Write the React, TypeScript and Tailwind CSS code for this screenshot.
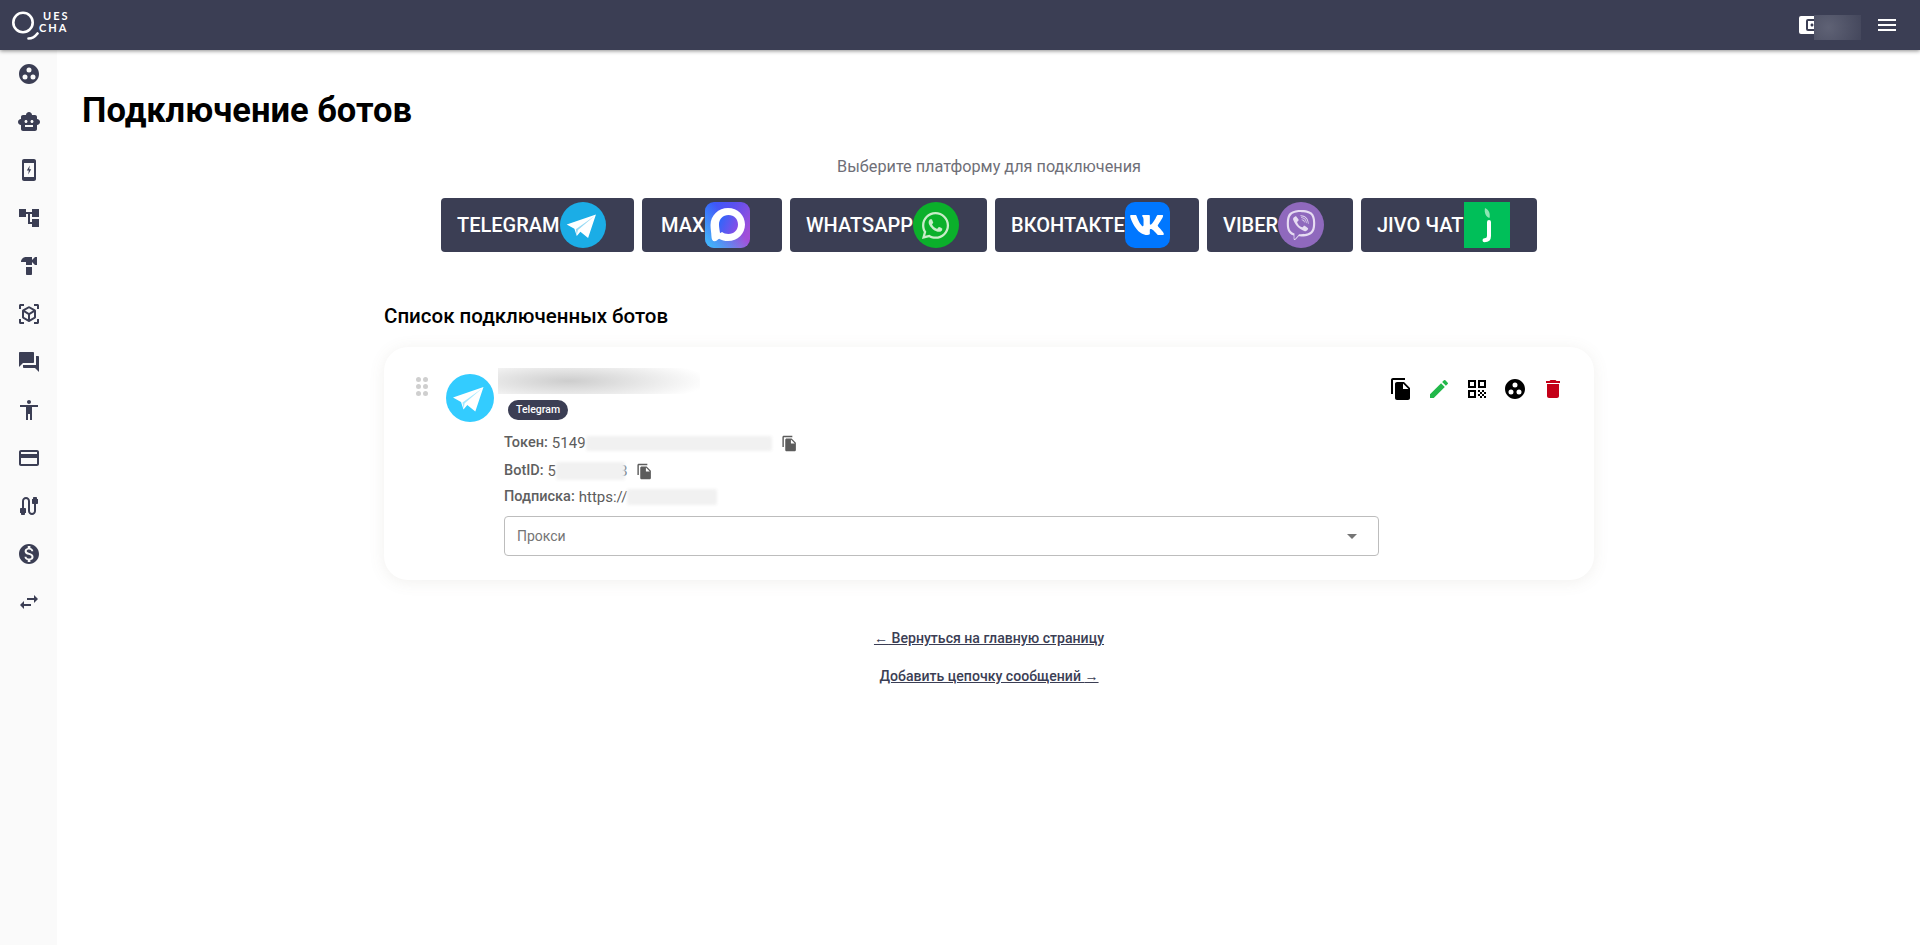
import React from "react";
import {
  MdGroupWork, MdSmartToy, MdAccountTree, MdHardware, MdViewInAr, MdForum, MdAccessibility,
  MdCreditCard, MdCable, MdMonetizationOn, MdSwapHoriz, MdFileCopy, MdEdit, MdQrCode, MdDelete,
  MdAccountBalanceWallet, MdMenu,
} from "react-icons/md";
import { FaWhatsapp, FaViber, FaVk } from "react-icons/fa";

const PhoneBolt = ({ className = "" }: { className?: string }) => (
  <svg viewBox="0 0 24 24" className={className} fill="currentColor">
    <path fillRule="evenodd" d="M7 1h10c1.100 0 2 .9 2 2v18c0 1.100-.9 2-2 2H7c-1.100 0-2-.9-2-2V3c0-1.100.9-2 2-2zm0 4v14h10V5H7z" />
    <path d="M12.800 7.500 9.800 12.600h2l-.6 3.900 3-5.200h-2z" />
  </svg>
);

const Plane = ({ bg, s }: { bg: string; s: number }) => (
  <svg viewBox="0 0 48 48" width={s} height={s} className="shrink-0">
    <circle cx="24" cy="24" r="24" fill={bg} />
    <path d="M37.500 13 7 23.500l8 4.500 2.500 7.500 3.800-4.400 8 6.400z" fill="#fff" />
    <path d="M36 14.500 16.500 28.500l1 6 1.200-5.200z" fill={bg} opacity=".45" />
  </svg>
);

const MaxIcon = () => (
  <svg viewBox="0 0 45 46" width="45" height="46" className="shrink-0">
    <defs>
      <linearGradient id="mx" x1="0" y1="0" x2="1" y2="0.6">
        <stop offset="0" stopColor="#2f5cff" />
        <stop offset=".5" stopColor="#5a50f0" />
        <stop offset="1" stopColor="#a24fd8" />
      </linearGradient>
      <linearGradient id="mb" x1="0" y1="1" x2="0.6" y2="0.45">
        <stop offset="0" stopColor="#3fc4fb" />
        <stop offset="1" stopColor="#3fc4fb" stopOpacity="0" />
      </linearGradient>
      <linearGradient id="mi" x1="0" y1="0.3" x2="1" y2="0.7">
        <stop offset="0" stopColor="#2f66fa" />
        <stop offset="1" stopColor="#8a4ce6" />
      </linearGradient>
    </defs>
    <rect width="45" height="46" rx="9" fill="url(#mx)" />
    <rect width="45" height="46" rx="9" fill="url(#mb)" />
    <path d="M23 6C13.500 6 5.500 13.500 5.500 23c0 4 .8 7.500.9 11 .1 3.500 1.300 5.200 3.100 5.200 1.700 0 3-1.400 4.600-2.500 2.600 1.500 5.600 2.300 8.900 2.300 9.700 0 17-7.400 17-16.500S32.700 6 23 6z" fill="#fff" />
    <path d="M23.500 13c5.600 0 9.500 4 9.500 9.500S29 32 23.500 32c-2.800 0-5-.9-6.500-2-.9.6-1.600.9-2 .9-.4-3-1-5.600-1-8.400 0-5.500 4-9.500 9.500-9.500z" fill="url(#mi)" />
  </svg>
);

const JivoIcon = () => (
  <div className="w-[46px] h-[46px] bg-[#00bf59] shrink-0">
    <svg viewBox="0 0 46 46" width="46" height="46">
      <path d="M21 6c3.500 1.500 5.500 5 4.500 10-3.500-1.200-5.500-5-4.500-10z" fill="#8fe6b4" />
      <path d="M25 20v14c0 2.800-1.600 4.200-4.500 4.200" fill="none" stroke="#fff" strokeWidth="4" strokeLinecap="round" />
    </svg>
  </div>
);

const sideIcons = [
  MdGroupWork, MdSmartToy, PhoneBolt, MdAccountTree, MdHardware, MdViewInAr, MdForum,
  MdAccessibility, MdCreditCard, MdCable, MdMonetizationOn, MdSwapHoriz,
];

const platforms = [
  { name: "Telegram", w: "w-[193px]", pl: "pl-[16px]", icon: <Plane bg="#1badE6" s={46} /> },
  { name: "Max", w: "w-[140px]", pl: "pl-[19px]", icon: <MaxIcon /> },
  {
    name: "WhatsApp", w: "w-[197px]", pl: "pl-[16px]",
    icon: (
      <div className="w-[46px] h-[46px] shrink-0 rounded-full bg-[#0bb02b] flex items-center justify-center text-[#c9ecc9] text-[31px]">
        <FaWhatsapp />
      </div>
    ),
  },
  {
    name: "ВКонтакте", w: "w-[204px]", pl: "pl-[16px]",
    icon: (
      <div className="w-[45px] h-[46px] shrink-0 rounded-[10px] bg-[#0077ff] flex items-center justify-center text-white text-[36px]">
        <FaVk />
      </div>
    ),
  },
  {
    name: "Viber", w: "w-[146px]", pl: "pl-[16px]",
    icon: (
      <div className="w-[46px] h-[46px] shrink-0 rounded-full bg-[#8f69bd] flex items-center justify-center text-[#e6dcf2] text-[30px]">
        <FaViber />
      </div>
    ),
  },
  { name: "Jivo чат", w: "w-[176px]", pl: "pl-[16px]", icon: <JivoIcon /> },
];

const BlurBox = ({ className }: { className: string }) => (
  <span className={"relative z-10 inline-block rounded-[2px] bg-[#f1f1f1] blur-[1.500px] " + className} />
);

export default function App() {
  return (
    <div className="h-screen w-full flex flex-col overflow-hidden bg-white font-['Roboto',sans-serif]">
      <header className="relative z-10 h-[50px] shrink-0 bg-[#3b3e54] shadow-[0_1px_4px_rgba(0,0,0,0.45)] flex items-center justify-between pl-[12px] pr-[21px]">
        <div className="flex items-center">
          <svg viewBox="0 0 27 30" width="27" height="30" className="-mt-[1px]">
            <circle cx="11" cy="12.500" r="9.700" fill="none" stroke="#fff" strokeWidth="2.600" />
            <path d="M16.500 28.500c3.500 0 6.500-1.800 9-5" fill="none" stroke="#fff" strokeWidth="2.600" strokeLinecap="round" />
          </svg>
          <div className="flex flex-col text-white font-bold text-[11px] leading-[12.500px] tracking-[2px] font-['Lato',sans-serif] mb-[5.500px]">
            <span className="ml-[4px]">UES</span>
            <span>CHA</span>
          </div>
        </div>
        <div className="flex items-center">
          <MdAccountBalanceWallet className="text-white text-[24px] -mr-[6px]" />
          <div className="w-[47px] h-[25px] bg-[radial-gradient(circle_at_30%_50%,#5f6275,#44475c)] mr-[14px] z-10 mt-[5px]" />
          <MdMenu className="text-white text-[24px]" />
        </div>
      </header>

      <div className="flex flex-1 min-h-0">
        <aside className="w-[57px] shrink-0 bg-[#fafafa] flex flex-col items-center gap-[24px] pt-[12px] text-[#3b3e54]">
          {sideIcons.map((Icon, i) => (
            <Icon key={i} className="w-[24px] h-[24px] shrink-0 text-[24px]" />
          ))}
        </aside>

        <main className="flex-1 min-w-0 pl-[25px] pr-[24px] pt-[40px] flex flex-col items-center">
          <h1 className="self-stretch text-[34.500px] leading-[40px] font-bold text-black">Подключение ботов</h1>
          <p className="mt-[25px] text-[16.250px] leading-[24px] text-[#6f6f78]">Выберите платформу для подключения</p>

          <div className="mt-[19px] flex justify-center gap-[8px]">
            {platforms.map((p) => (
              <button
                key={p.name}
                className={"h-[54px] rounded-[4px] bg-[#3b3e54] text-white flex items-center text-[20px] font-medium uppercase " + p.w + " " + p.pl}
              >
                <span className="whitespace-nowrap">{p.name}</span>
                {p.icon}
              </button>
            ))}
          </div>

          <div className="w-[1210px] mt-[50px]">
            <h2 className="text-[20.500px] leading-[28px] font-medium text-black">Список подключенных ботов</h2>

            <div className="mt-[17px] h-[233px] rounded-[24px] bg-white shadow-[0_2px_16px_rgba(120,110,90,0.10)] pl-[32px] pr-[29px] pt-[21px] flex">
              <div className="w-[30px] shrink-0">
                <div className="grid grid-cols-2 gap-x-[2px] gap-y-[2px] w-[12px] mt-[9px]">
                  {Array.from({ length: 6 }).map((_, i) => (
                    <span key={i} className="w-[5px] h-[5px] rounded-full bg-[#cfcfcf]" />
                  ))}
                </div>
              </div>
              <div className="shrink-0 mt-[6px]">
                <Plane bg="#33ccff" s={48} />
              </div>
              <div className="ml-[10px] flex-1 min-w-0">
                <div className="h-[26px] w-[202px] -ml-[6px] bg-[radial-gradient(ellipse_70%_90%_at_35%_50%,#cdcdcd_0%,#e6e6e6_50%,#ffffff_100%)]" />
                <span className="ml-[4px] mt-[6px] inline-flex items-center h-[20px] px-[8px] rounded-full bg-[#3b3e54] text-white text-[10.500px] font-medium">Telegram</span>

                <div className="mt-[9px] h-[28px] flex items-center text-[15px] text-[#5c5c5c]">
                  <b className="font-medium text-[14.500px] text-[#5f5f5f]">Токен:</b>
                  <span className="ml-[4px]">5149</span>
                  <BlurBox className="w-[186px] h-[15px]" />
                  <MdFileCopy className="ml-[9px] text-[17px] text-[#5c5c5c]" />
                </div>
                <div className="h-[28px] flex items-center text-[15px] text-[#5c5c5c]">
                  <b className="font-medium text-[14.500px] text-[#5f5f5f]">BotID:</b>
                  <span className="ml-[4px]">5</span>
                  <BlurBox className="w-[69px] h-[18px]" />
                  <span className="-ml-[6px]">8</span>
                  <MdFileCopy className="ml-[9px] text-[17px] text-[#5c5c5c]" />
                </div>
                <div className="h-[24px] flex items-center text-[15px] text-[#5c5c5c]">
                  <b className="font-medium text-[14.500px] text-[#5f5f5f]">Подписка:</b>
                  <span className="ml-[4px]">https://</span>
                  <BlurBox className="w-[90px] h-[16px]" />
                </div>

                <div className="mt-[7px] w-[875px] h-[40px] rounded-[4px] border border-[#bdbdbd] flex items-center justify-between pl-[12px] pr-[21px] text-[14px] text-[#757575]">
                  <span>Прокси</span>
                  <span className="w-0 h-0 border-x-[5px] border-x-transparent border-t-[5px] border-t-[#757575]" />
                </div>
              </div>
              <div className="shrink-0 flex gap-[14px] h-[24px] mt-[9px] text-[24px]">
                <MdFileCopy className="text-black" />
                <MdEdit className="text-[#22b84a]" />
                <MdQrCode className="text-black" />
                <MdGroupWork className="text-black" />
                <MdDelete className="text-[#c40018]" />
              </div>
            </div>
          </div>

          <a href="#" className="mt-[50px] text-[14.100px] leading-[16px] font-medium text-[#3b3e54] underline">
            <span className="font-['Liberation_Sans',sans-serif] font-normal">←</span> Вернуться на главную страницу
          </a>
          <a href="#" className="mt-[22px] text-[14.100px] leading-[16px] font-medium text-[#3b3e54] underline">
            Добавить цепочку сообщений <span className="font-['Liberation_Sans',sans-serif] font-normal">→</span>
          </a>
        </main>
      </div>
    </div>
  );
}
